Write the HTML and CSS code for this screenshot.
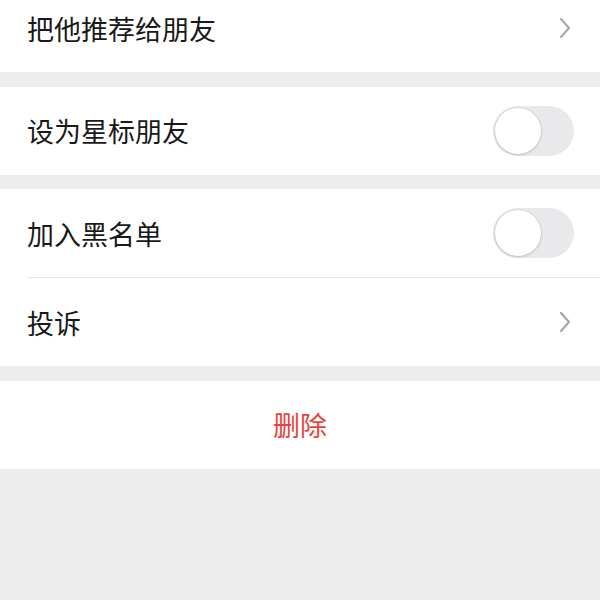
FILE: index.html
```html
<!DOCTYPE html>
<html lang="zh">
  <head>
    <meta charset="UTF-8" />
    <meta name="viewport" content="width=device-width, initial-scale=1.0" />
    <title>资料设置</title>
    <link rel="stylesheet" href="styles.css">
  </head>
  <body>
    <div class="settings">
      <section class="group group-first">
        <div class="cell">
          <span class="cell-title">把他推荐给朋友</span>
          <svg class="arrow" width="12" height="22" viewBox="0 0 12 22">
            <polyline points="2,2 10,11 2,20" />
          </svg>
        </div>
      </section>

      <section class="group">
        <div class="cell">
          <span class="cell-title">设为星标朋友</span>
          <span class="switch"><span class="knob"></span></span>
        </div>
      </section>

      <section class="group">
        <div class="cell">
          <span class="cell-title">加入黑名单</span>
          <span class="switch"><span class="knob"></span></span>
        </div>
        <div class="cell cell-divided">
          <span class="cell-title">投诉</span>
          <svg class="arrow" width="12" height="22" viewBox="0 0 12 22">
            <polyline points="2,2 10,11 2,20" />
          </svg>
        </div>
      </section>

      <section class="group">
        <div class="cell cell-danger">删除</div>
      </section>
    </div>
  </body>
</html>
```

FILE: styles.css
```css
:root {
  --bg: #ededed;
  --white: #ffffff;
  --text: #191919;
  --danger: #e64340;
  --line: #e5e5e5;
  --arrow: #a8a8a8;
}
* {
  margin: 0;
  padding: 0;
  box-sizing: border-box;
}
body {
  font-family: "Noto Sans CJK SC", "Noto Sans", sans-serif;
  background: var(--bg);
  color: var(--text);
  min-height: 100vh;
}
.settings {
  display: flex;
  flex-direction: column;
  gap: 14.5px;
}
.group {
  background: var(--white);
}
.group-first {
  margin-top: -16px;
}
.cell {
  display: flex;
  align-items: center;
  justify-content: space-between;
  height: 88px;
  padding: 0 26px 0 27px;
  font-size: 27px;
  line-height: 1;
  position: relative;
}
.cell-divided::before {
  content: "";
  position: absolute;
  top: 0;
  left: 27px;
  right: 0;
  height: 1px;
  background: var(--line);
}
.cell-divided {
  height: 89px;
  padding-top: 1px;
}
.arrow {
  margin-right: 3px;
}
.arrow polyline {
  fill: none;
  stroke: var(--arrow);
  stroke-width: 2.2;
  stroke-linecap: round;
  stroke-linejoin: round;
}
.switch {
  width: 81px;
  height: 50px;
  border-radius: 25px;
  background: #e9e9eb;
  display: flex;
  align-items: center;
  padding: 0 2px;
}
.knob {
  width: 46px;
  height: 46px;
  border-radius: 50%;
  background: var(--white);
  box-shadow: 0 0 0 1px rgba(0, 0, 0, 0.05), 0 1px 3px rgba(0, 0, 0, 0.14);
}
.cell-danger {
  justify-content: center;
  color: var(--danger);
  padding: 0;
}
```
